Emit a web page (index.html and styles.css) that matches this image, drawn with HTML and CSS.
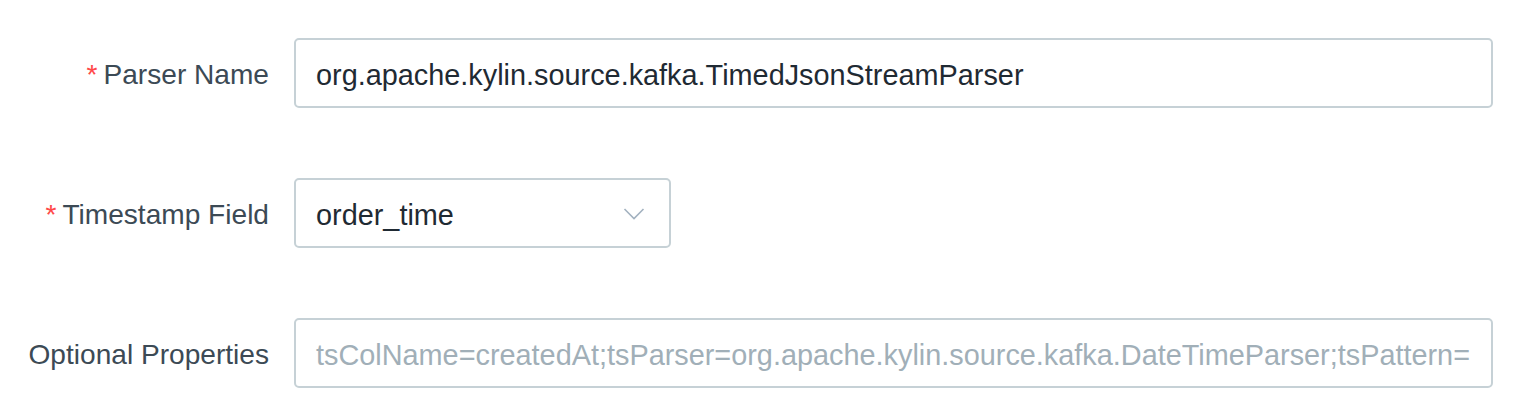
FILE: index.html
```html
<!DOCTYPE html>
<html>
<head>
<meta charset="utf-8">
<link rel="stylesheet" href="styles.css">
</head>
<body>
<form class="form">
  <div class="row">
    <label class="label required">Parser Name</label>
    <div class="control">
      <div class="input wide"><span class="value">org.apache.kylin.source.kafka.TimedJsonStreamParser</span></div>
    </div>
  </div>
  <div class="row">
    <label class="label required">Timestamp Field</label>
    <div class="control">
      <div class="input select"><span class="value">order_time</span>
        <svg class="arrow" width="22" height="14" viewBox="0 0 22 14"><path d="M1.5 2 L11 11.5 L20.5 2" fill="none" stroke="#a3b2c0" stroke-width="1.6"/></svg>
      </div>
    </div>
  </div>
  <div class="row">
    <label class="label">Optional Properties</label>
    <div class="control">
      <div class="input wide"><span class="placeholder">tsColName=createdAt;tsParser=org.apache.kylin.source.kafka.DateTimeParser;tsPattern=</span></div>
    </div>
  </div>
</form>
</body>
</html>
```
FILE: styles.css
```css
html, body {
  margin: 0;
  padding: 0;
  background: #ffffff;
}
body {
  font-family: "Liberation Sans", Arial, Helvetica, sans-serif;
  font-size: 28px;
}
.form {
  display: flex;
  flex-direction: column;
  gap: 70px;
  padding-top: 38px;
}
.row {
  display: flex;
  align-items: center;
  height: 70px;
}
.label {
  width: 294px;
  box-sizing: border-box;
  padding-right: 25px;
  padding-top: 4px;
  text-align: right;
  color: #3c4a55;
  font-size: 28.1px;
  white-space: nowrap;
}
.required::before {
  content: "*";
  color: #ff4949;
  margin-right: 6px;
}
.control {
  flex: 1;
  display: flex;
}
.input {
  box-sizing: border-box;
  height: 70px;
  border: 2px solid #c6d1d6;
  border-radius: 5px;
  display: flex;
  align-items: center;
  padding: 4px 20px 0 20px;
  overflow: hidden;
  white-space: nowrap;
  font-size: 28.85px;
}
.wide {
  width: 1199px;
}
.select {
  width: 377px;
  justify-content: space-between;
  padding-right: 24px;
}
.value {
  color: #1f2a33;
}
.placeholder {
  color: #a1afb8;
}
.arrow {
  display: block;
  margin-top: -2px;
}
```
